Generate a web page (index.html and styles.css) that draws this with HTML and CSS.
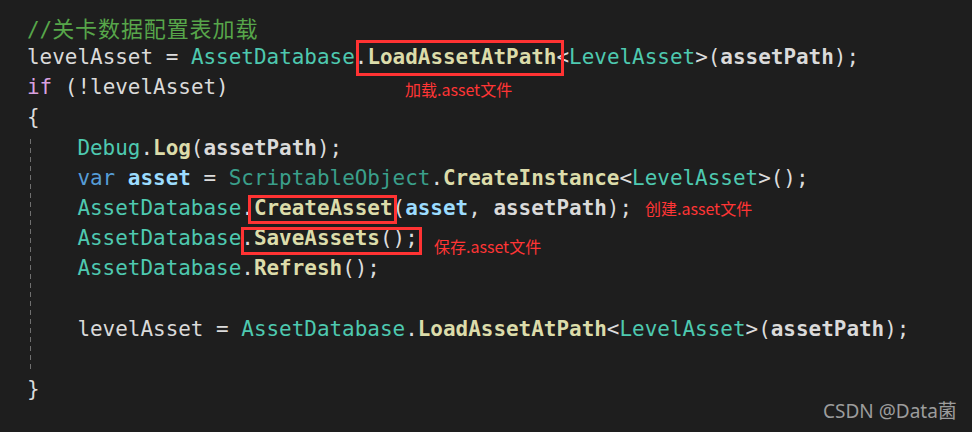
FILE: index.html
```html
<!DOCTYPE html>
<html>
<head>
<meta charset="utf-8">
<link rel="stylesheet" href="styles.css">
</head>
<body>
<div class="screen">
  <div class="code">
    <div class="line"><span class="cm">//<span class="cjk">关卡数据配置表加载</span></span></div>
    <div class="line"><span class="id">levelAsset</span> = <span class="ty">AssetDatabase</span>.<span class="mt b">LoadAssetAtPath</span>&lt;<span class="ty">LevelAsset</span>&gt;(<span class="pm b">assetPath</span>);</div>
    <div class="line"><span class="kw">if</span> (!<span class="id">levelAsset</span>)</div>
    <div class="line">{</div>
    <div class="block">
      <div class="line"><span class="ty">Debug</span>.<span class="mt b">Log</span>(<span class="pm b">assetPath</span>);</div>
      <div class="line"><span class="kb">var</span> <span class="lc b">asset</span> = <span class="ty2">ScriptableObject</span>.<span class="mt b">CreateInstance</span>&lt;<span class="ty">LevelAsset</span>&gt;();</div>
      <div class="line"><span class="ty">AssetDatabase</span>.<span class="mt b">CreateAsset</span>(<span class="lc b">asset</span>, <span class="pm b">assetPath</span>);</div>
      <div class="line"><span class="ty">AssetDatabase</span>.<span class="mt b">SaveAssets</span>();</div>
      <div class="line"><span class="ty">AssetDatabase</span>.<span class="mt b">Refresh</span>();</div>
      <div class="line"> </div>
      <div class="line"><span class="id">levelAsset</span> = <span class="ty">AssetDatabase</span>.<span class="mt b">LoadAssetAtPath</span>&lt;<span class="ty">LevelAsset</span>&gt;(<span class="pm b">assetPath</span>);</div>
      <div class="line"> </div>
    </div>
    <div class="line">}</div>
  </div>

  <div class="mark mark-load"></div>
  <div class="mark mark-create"></div>
  <div class="mark mark-save"></div>

  <span class="note note-load">加载.asset文件</span>
  <span class="note note-create">创建.asset文件</span>
  <span class="note note-save">保存.asset文件</span>

  <span class="watermark">CSDN @Data菌</span>
</div>
</body>
</html>
```

FILE: styles.css
```css
html, body {
  margin: 0;
  padding: 0;
  background: #1e1e1e;
}

.screen {
  position: relative;
  width: 972px;
  height: 432px;
  overflow: hidden;
  background: #1e1e1e;
}

.code {
  padding: 12px 0 0 27px;
  font-family: "DejaVu Sans Mono", "Liberation Mono", "Noto Sans CJK SC", monospace;
  font-size: 20.94px;
  line-height: 30.17px;
  color: #dcdcdc;
}

.line {
  white-space: pre;
  height: 30.17px;
}

.block {
  padding-left: 50.4px;
  background-image: repeating-linear-gradient(to bottom, #707070 0 5px, transparent 5px 9px);
  background-size: 1px calc(100% - 10px);
  background-position: 3px 6px;
  background-repeat: no-repeat;
}

.b { font-weight: bold; }
.cm { color: #57a64a; }
.cjk {
  font-family: "Noto Sans CJK SC", sans-serif;
  font-size: 22px;
  letter-spacing: 0.9px;
}
.kw { color: #d8a0df; }
.kb { color: #569cd6; }
.ty { color: #4ec9b0; }
.ty2 { color: #3a9f8a; }
.mt { color: #dcdcaa; }
.id { color: #dadada; }
.pm { color: #dadada; }
.lc { color: #9cdcfe; }

.mark {
  position: absolute;
  box-sizing: border-box;
  border: 3px solid #ff3333;
}
.mark-load { left: 356px; top: 40px; width: 208px; height: 36px; }
.mark-create { left: 248px; top: 195px; width: 149px; height: 29px; }
.mark-save { left: 241px; top: 227px; width: 181px; height: 28px; }

.note {
  position: absolute;
  font-family: "Noto Sans CJK SC", "Noto Sans", sans-serif;
  font-size: 16px;
  line-height: 16px;
  color: #ff3535;
  white-space: nowrap;
}
.note-load { left: 405px; top: 81px; }
.note-create { left: 645px; top: 200px; }
.note-save { left: 434px; top: 238px; }

.watermark {
  position: absolute;
  left: 823px;
  top: 402px;
  font-family: "Noto Sans", "Noto Sans CJK SC", sans-serif;
  font-size: 19px;
  line-height: 19px;
  color: #9c9c9c;
  white-space: nowrap;
}
```
